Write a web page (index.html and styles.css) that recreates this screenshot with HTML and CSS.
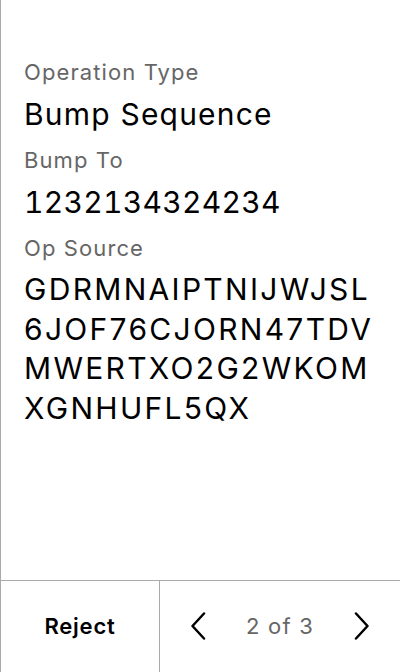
FILE: index.html
```html
<!DOCTYPE html>
<html>
<head>
<meta charset="utf-8">
<link rel="stylesheet" href="styles.css">
</head>
<body>
<div class="screen">
  <main class="content">
    <div class="field">
      <div class="label">Operation Type</div>
      <div class="value">Bump Sequence</div>
    </div>
    <div class="field">
      <div class="label">Bump To</div>
      <div class="value digits">1232134324234</div>
    </div>
    <div class="field">
      <div class="label">Op Source</div>
      <div class="value address">GDRMNAIPTNIJWJSL6JOF76CJORN47TDVMWERTXO2G2WKOMXGNHUFL5QX</div>
    </div>
  </main>
  <footer class="footer">
    <div class="reject">Reject</div>
    <div class="pager">
      <svg class="chev" width="16" height="28" viewBox="0 0 16 28"><path d="M14 1.5 L2.5 14 L14 26.5" fill="none" stroke="#000" stroke-width="2.5" stroke-linecap="round" stroke-linejoin="round"/></svg>
      <span class="count">2 of 3</span>
      <svg class="chev" width="16" height="28" viewBox="0 0 16 28"><path d="M2 1.5 L13.5 14 L2 26.5" fill="none" stroke="#000" stroke-width="2.5" stroke-linecap="round" stroke-linejoin="round"/></svg>
    </div>
  </footer>
</div>
</body>
</html>
```
FILE: styles.css
```css
* { box-sizing: border-box; }
html, body { margin: 0; padding: 0; background: #fff; }
body { font-family: Inter, "Noto Sans", sans-serif; color: #000; }
.screen {
  width: 400px;
  height: 672px;
  border-left: 1px solid #aaa;
  display: flex;
  flex-direction: column;
}
.content {
  flex: 1;
  padding: 58px 20px 0 23px;
  display: flex;
  flex-direction: column;
  gap: 12px;
}
.label {
  font-size: 22px;
  line-height: 28px;
  color: #666;
  margin-bottom: 8px;
  letter-spacing: 1.1px;
}
.value {
  font-size: 30px;
  line-height: 40px;
  color: #000;
  letter-spacing: 1.2px;
}
.digits { font-variant-numeric: tabular-nums; letter-spacing: 0.3px; }
.address { word-break: break-all; letter-spacing: 2.3px; line-height: 39.5px; margin-top: 1px; }
.footer {
  height: 92px;
  border-top: 1px solid #aaa;
  display: flex;
}
.reject {
  width: 159px;
  border-right: 1px solid #aaa;
  display: flex;
  align-items: center;
  justify-content: center;
  font-size: 22px;
  font-weight: 600;
  letter-spacing: 0.8px;
  padding-bottom: 2px;
}
.pager {
  flex: 1;
  display: flex;
  align-items: center;
  justify-content: center;
  gap: 40px;
  padding-bottom: 2px;
}
.count { font-size: 22px; color: #666; letter-spacing: 1.2px; }
```
